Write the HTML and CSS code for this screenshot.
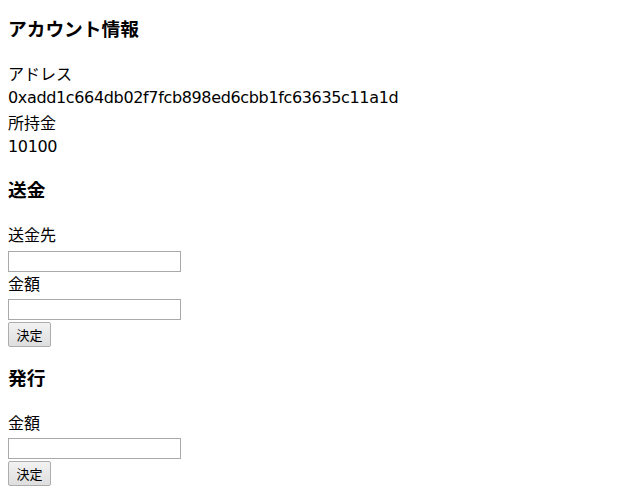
FILE: index.html
```
<!DOCTYPE html>
<html lang="ja">
<head>
<meta charset="utf-8">
<title>アカウント情報</title>
<link rel="stylesheet" href="styles.css">
</head>
<body>
<section class="section first">
  <h3 class="title">アカウント情報</h3>
  <div class="line">アドレス</div>
  <div class="line latin">0xadd1c664db02f7fcb898ed6cbb1fc63635c11a1d</div>
  <div class="line">所持金</div>
  <div class="line latin">10100</div>
</section>
<section class="section">
  <h3 class="title">送金</h3>
  <div class="line">送金先</div>
  <input class="field" type="text">
  <div class="line">金額</div>
  <input class="field" type="text">
  <button class="btn" type="button">決定</button>
</section>
<section class="section">
  <h3 class="title">発行</h3>
  <div class="line">金額</div>
  <input class="field" type="text">
  <button class="btn" type="button">決定</button>
</section>
</body>
</html>
```
FILE: styles.css
```
html, body {
  background: #ffffff;
}
body {
  margin: 8px;
  color: #000000;
  font-family: "Noto Sans", "Noto Sans CJK JP", sans-serif;
  font-size: 16px;
}
.section {
  display: flex;
  flex-direction: column;
  align-items: flex-start;
}
.title {
  font-size: 18.72px;
  font-weight: bold;
  line-height: 22px;
  margin: 20px 0 22px;
}
.first .title {
  margin-top: 10px;
}
.line {
  line-height: 24.33px;
  white-space: nowrap;
}
.latin {
  font-family: "DejaVu Sans", "Noto Sans CJK JP", sans-serif;
  letter-spacing: -0.35px;
}
.field {
  box-sizing: border-box;
  width: 173px;
  height: 21px;
  margin: 3px 0 0;
  padding: 1px 2px;
  border: 1px solid #a9a9a9;
  background: #ffffff;
  font: 13px "Noto Sans", "Noto Sans CJK JP", sans-serif;
}
.btn {
  box-sizing: border-box;
  width: 43px;
  height: 25px;
  margin: 2px 0 0;
  padding: 0 4px;
  border: 1px solid #adadad;
  border-radius: 2px;
  background: linear-gradient(#f2f2f2, #dedede);
  color: #000000;
  font: 13px "Noto Sans CJK JP", sans-serif;
  line-height: 23px;
}
```
